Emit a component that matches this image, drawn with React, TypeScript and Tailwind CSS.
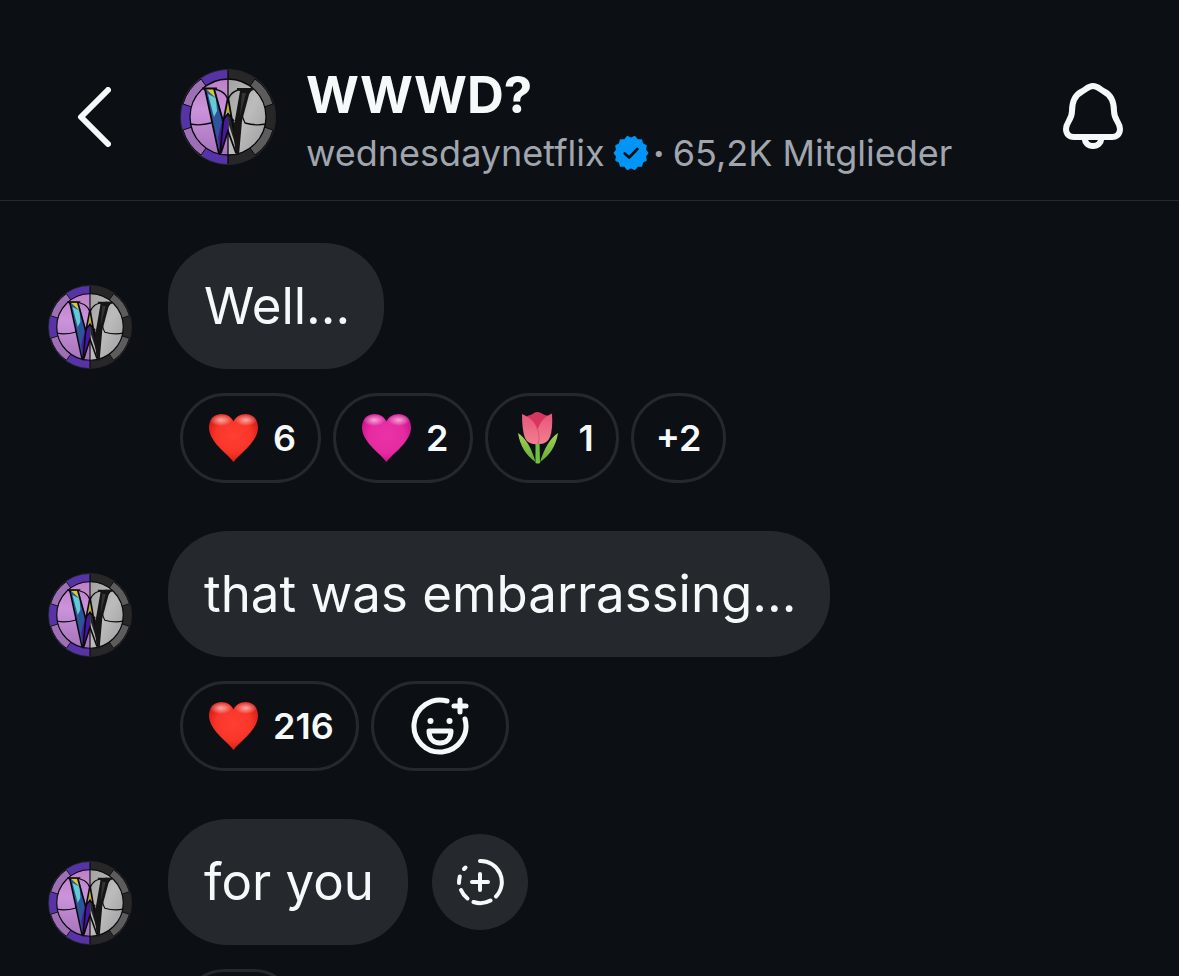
import type { ReactNode } from "react";

interface Reaction {
  emoji: "heart" | "pink-heart" | "tulip";
  count?: number;
}

interface Message {
  id: number;
  text: string;
  reactions: Reaction[];
  more?: number;
  canReact?: boolean;
  canShare?: boolean;
}

const messages: Message[] = [
  {
    id: 1,
    text: "Well...",
    reactions: [
      { emoji: "heart", count: 6 },
      { emoji: "pink-heart", count: 2 },
      { emoji: "tulip", count: 1 },
    ],
    more: 2,
  },
  {
    id: 2,
    text: "that was embarrassing...",
    reactions: [{ emoji: "heart", count: 216 }],
    canReact: true,
  },
  { id: 3, text: "for you", reactions: [{ emoji: "heart" }], canShare: true },
];

// 14 lobes around the verified badge, outer and inner points in turn
const badgePoints = Array.from({ length: 28 }, (_, i) => {
  const angle = (i * Math.PI) / 14 - Math.PI / 2;
  const radius = i % 2 ? 18.4 : 16;
  return `${20 + radius * Math.cos(angle)},${20 + radius * Math.sin(angle)}`;
}).join(" ");

function ChannelAvatar({ className }: { className: string }) {
  return (
    <svg viewBox="0 0 96 96" className={className} role="img" aria-label="wednesdaynetflix">
      <defs>
        <linearGradient id="glass-left" x1="0" y1="0" x2="0" y2="1">
          <stop offset="0" stopColor="#bd80c8" />
          <stop offset=".4" stopColor="#cb93da" />
          <stop offset="1" stopColor="#a672bd" />
        </linearGradient>
        <linearGradient id="glass-right" x1="0" y1="0" x2="1" y2="1">
          <stop offset="0" stopColor="#a2a2a3" />
          <stop offset=".5" stopColor="#bcbcbd" />
          <stop offset="1" stopColor="#9b9b9c" />
        </linearGradient>
      </defs>
      <circle cx="48" cy="48" r="48" fill="#25262a" />
      {/* stained glass ring */}
      <path d="M48 1A47 47 0 0 0 48 95Z" fill="#5733a8" />
      <path d="M48 1A47 47 0 0 1 48 95Z" fill="#272728" />
      <g stroke="#0b0b0e" strokeWidth="1">
        <path d="M21 10A47 47 0 0 0 3 35L12 38A38 38 0 0 1 26 17Z" fill="#9d70b6" />
        <path d="M3 61A47 47 0 0 0 21 86L26 79A38 38 0 0 1 12 58Z" fill="#9d70b6" />
        <path d="M75 10A47 47 0 0 1 93 35L84 38A38 38 0 0 0 70 17Z" fill="#5c5c5d" />
        <path d="M93 61A47 47 0 0 1 75 86L70 79A38 38 0 0 0 84 58Z" fill="#5c5c5d" />
      </g>
      <path d="M48 10A38 38 0 0 0 48 86Z" fill="url(#glass-left)" />
      <path d="M48 10A38 38 0 0 1 48 86Z" fill="url(#glass-right)" />
      <g fill="none" stroke="#09090c" strokeWidth="1.3">
        <circle cx="48" cy="48" r="38" />
        <path d="M48 1V95" />
        <path d="M10 55Q20 57 31 54Q40 38 24 20Q44 18 48 31" />
        <path d="M86 55Q76 57 65 54Q56 38 72 20Q52 18 48 31" />
      </g>
      {/* the W, coloured on the left half and black on the right */}
      <path d="M25 20H35L44 54L40 85Z" fill="#2d559c" />
      <path d="M26 20H35L36 29Z" fill="#d5cc33" />
      <path d="M28 25L36 29L37 42L34 48Z" fill="#64cbd0" />
      <path d="M42 52L48 46L48 64L40 86L38 68Z" fill="#47189c" />
      <path d="M48 28L45 44H51Z" fill="#b9b02c" />
      <path d="M48 46L55 54L58 84L49 56Z" fill="#24251f" />
      <path
        d="M22 19.500H37M25 20L39 85M34 20L43 52M40 86L43 54L48 28L58 86M42 52L48 45L54 52M41 84L48 62L56 84"
        fill="none"
        stroke="#09090c"
        strokeWidth="1.8"
      />
      <path d="M57 19H74V21L70 22L62 52L59 86H56L53 62L60 22L57 21Z" fill="#151516" />
      <path d="M62 24L66 24L60 47Z" fill="#343532" />
    </svg>
  );
}

function VerifiedBadge() {
  return (
    <svg viewBox="0 0 40 40" className="size-9 shrink-0" role="img" aria-label="Verifiziert">
      <polygon points={badgePoints} fill="#0095f6" stroke="#0095f6" strokeWidth="2" strokeLinejoin="round" />
      <path d="M13 20.500L18 25L27 15.500" fill="none" stroke="#0c1014" strokeWidth="3" strokeLinecap="round" strokeLinejoin="round" />
    </svg>
  );
}

function Heart({ pink = false }: { pink?: boolean }) {
  const id = pink ? "heart-pink" : "heart-red";
  return (
    <svg viewBox="0 0 58 58" className="size-[58px]" aria-hidden="true">
      <defs>
        <radialGradient id={id} cx="50%" cy="45%" r="60%">
          <stop offset="0" stopColor={pink ? "#ea32a5" : "#ff4032"} />
          <stop offset=".6" stopColor={pink ? "#e62ba2" : "#f93529"} />
          <stop offset="1" stopColor={pink ? "#c70d86" : "#cf1710"} />
        </radialGradient>
        <radialGradient id={`${id}-shine`}>
          <stop offset="0" stopColor="#fff" stopOpacity=".6" />
          <stop offset="1" stopColor="#fff" stopOpacity="0" />
        </radialGradient>
      </defs>
      <path
        d="M28.500 53C22 44 4 33 4 18.500C4 10 9.500 5 16.500 5C22 5 26.500 8 28.500 12.500C30.500 8 35 5 40.500 5C47.500 5 53 10 53 18.500C53 33 35 44 28.500 53Z"
        fill={`url(#${id})`}
      />
      <ellipse cx="16" cy="11" rx="11" ry="6" fill={`url(#${id}-shine)`} />
      <ellipse cx="41" cy="11" rx="11" ry="6" fill={`url(#${id}-shine)`} />
    </svg>
  );
}

function Tulip() {
  return (
    <svg viewBox="0 0 58 58" className="size-[58px]" aria-hidden="true">
      <defs>
        <linearGradient id="tulip-petal" x1="0" y1="0" x2="0" y2="1">
          <stop offset="0" stopColor="#e8557c" />
          <stop offset="1" stopColor="#f0808f" />
        </linearGradient>
        <linearGradient id="tulip-leaf" x1="0" y1="0" x2="0" y2="1">
          <stop offset="0" stopColor="#a9d15c" />
          <stop offset="1" stopColor="#5fae32" />
        </linearGradient>
      </defs>
      <path d="M25.500 33H29.500L30 54Q28 55 25.500 54Z" fill="#6cc341" />
      <path d="M8 24Q19 31 25.500 53Q11 43 8 24ZM48 24Q37 31 30 53Q45 43 48 24Z" fill="url(#tulip-leaf)" />
      <path d="M17 7Q22 6 24 4Q27 2 31 4Q34 6 38 7L34 24H21Z" fill="#d9365f" />
      <path d="M42 4.500Q33 8 29 17Q25 27 27 35Q37 36 40 28Q43 20 42 4.500Z" fill="url(#tulip-petal)" />
      <path d="M12 5Q22 9 26 17Q31 27 28 35Q18 36 15 29Q12 21 12 5Z" fill="url(#tulip-petal)" />
      <path d="M26 17Q31 27 28 35" fill="none" stroke="#dd5570" strokeWidth="1" />
    </svg>
  );
}

function BellIcon() {
  return (
    <svg viewBox="0 0 60 68" className="h-[68px] w-[60px]" fill="none" stroke="currentColor" strokeWidth="6" aria-hidden="true">
      <path
        d="M30 3C25 3 23 6.500 19 8.500C12 12 9 19 9 28C9 37 3 39 3 46C3 51 6 54 11 54H49C54 54 57 51 57 46C57 39 51 37 51 28C51 19 48 12 41 8.500C37 6.500 35 3 30 3Z"
        strokeLinejoin="round"
      />
      <path d="M21.500 55C22 60 25 63 30 63C35 63 38 60 38.500 55" strokeWidth="6" />
    </svg>
  );
}

function AddReactionIcon() {
  return (
    <svg viewBox="0 0 60 60" className="size-[60px]" fill="none" stroke="currentColor" strokeWidth="5" strokeLinecap="round" aria-hidden="true">
      <path d="M37 5A26 26 0 1 0 55 23" />
      <path d="M50 4V16M44 10H56" />
      <path d="M19 35H41C41 43 36 47 30 47C24 47 19 43 19 35Z" strokeLinejoin="round" />
      <circle cx="20.500" cy="25" r="3" fill="currentColor" stroke="none" />
      <circle cx="39.500" cy="25" r="3" fill="currentColor" stroke="none" />
    </svg>
  );
}

function ShareToStoryIcon() {
  return (
    <svg viewBox="0 0 48 48" className="size-12" fill="none" stroke="currentColor" strokeWidth="4" strokeLinecap="round" aria-hidden="true">
      <path d="M24 3A21 21 0 0 1 40 38.500" />
      <path d="M34.500 42.500A21 21 0 0 1 17.500 44" />
      <path d="M11.500 40.500A21 21 0 0 1 5 32" />
      <path d="M3 25Q3 22 3.800 18.500" />
      <path d="M8 11L9.500 9.500" />
      <path d="M24 16V32M16 24H32" />
    </svg>
  );
}

function Pill({ label, className, children }: { label?: string; className: string; children: ReactNode }) {
  return (
    <button
      type="button"
      aria-label={label}
      className={`flex h-[90px] shrink-0 items-center rounded-[45px] border-3 border-[#25282d] text-4xl font-semibold ${className}`}
    >
      {children}
    </button>
  );
}

function ReactionPill({ emoji, count }: Reaction) {
  return (
    <Pill label={`${emoji} ${count ?? ""}`} className={count ? "gap-[10px] px-[22px]" : "px-[27px]"}>
      {emoji === "tulip" ? <Tulip /> : <Heart pink={emoji === "pink-heart"} />}
      {count && <span>{count}</span>}
    </Pill>
  );
}

function MessageRow({ message }: { message: Message }) {
  return (
    <li>
      <div className="flex items-center">
        <ChannelAvatar className="mr-9 size-[84px] shrink-0 self-end" />
        <p className="flex min-h-[126px] items-center rounded-[60px] bg-[#25282d] pr-[34px] pl-9 text-[51px]">
          {message.text}
        </p>
        {message.canShare && (
          <button
            type="button"
            aria-label="In Story teilen"
            className="ml-6 flex size-24 shrink-0 items-center justify-center rounded-full bg-[#25282d]"
          >
            <ShareToStoryIcon />
          </button>
        )}
      </div>
      <div className="mt-6 ml-[132px] flex gap-3">
        {message.reactions.map((r) => (
          <ReactionPill key={r.emoji} {...r} />
        ))}
        {message.more && <Pill className="px-[22px]">+{message.more}</Pill>}
        {message.canReact && (
          <Pill label="Reagieren" className="px-9">
            <AddReactionIcon />
          </Pill>
        )}
      </div>
    </li>
  );
}

export default function App() {
  return (
    <div className="flex h-screen flex-col overflow-hidden bg-[#0c1014] font-['Inter',sans-serif] text-[#f5f9fa]">
      <header className="flex shrink-0 items-center border-b border-[#25282d] pt-[34px] pr-14 pl-16">
        <button type="button" aria-label="Zurück" className="mr-14 flex h-[166px] w-[60px] items-center justify-center">
          <svg viewBox="0 0 34 60" className="h-[60px] w-[34px]" fill="none" stroke="currentColor" strokeWidth="6" strokeLinecap="round" strokeLinejoin="round" aria-hidden="true">
            <path d="M31 3L4 30L31 57" />
          </svg>
        </button>
        <ChannelAvatar className="mr-[30px] size-24 shrink-0" />
        <div className="min-w-0 flex-1 pt-3">
          <h1 className="text-[51px] leading-[60px] font-bold">WWWD?</h1>
          <p className="flex items-center text-4xl leading-[56px] whitespace-nowrap text-[#a1a5ae]">
            <span>wednesdaynetflix</span>
            <span className="ml-2">
              <VerifiedBadge />
            </span>
            <span className="ml-1 font-bold">·</span>
            <span className="ml-2">65,2K Mitglieder</span>
          </p>
        </div>
        <button type="button" aria-label="Benachrichtigungen">
          <BellIcon />
        </button>
      </header>
      <main className="flex-1 overflow-hidden px-12 pt-[42px]">
        <ul className="space-y-12">
          {messages.map((m) => (
            <MessageRow key={m.id} message={m} />
          ))}
        </ul>
      </main>
    </div>
  );
}
